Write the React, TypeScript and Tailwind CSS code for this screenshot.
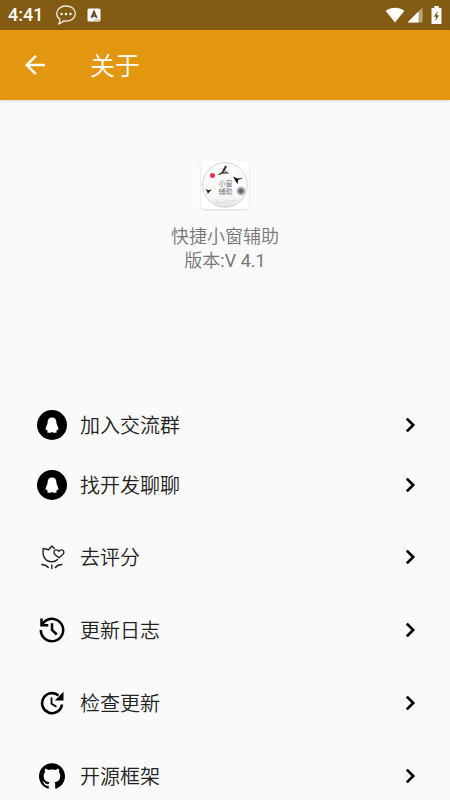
import type {ReactNode} from "react";
import {MdArrowBack} from "react-icons/md";

export default function App() {
    return <div className="flex h-screen flex-col bg-[#fafafa] font-['Roboto','Noto_Sans_CJK_SC',sans-serif]">
        <StatusBar/>
        <header className="z-10 flex h-[70px] shrink-0 items-center bg-[#e3970f] px-5 text-white shadow">
            <button type="button" aria-label="返回">
                <MdArrowBack className="size-[30px]"/>
            </button>
            <h1 className="ml-10 pt-1 text-[25px] leading-8 font-[350]">关于</h1>
        </header>

        <main className="min-h-0 flex-1 overflow-y-auto [scrollbar-width:none]">
            <div className="flex h-[295px] flex-col items-center pt-[61px]">
                <AppLogo/>
                <div className="mt-4 text-center text-[18px] leading-6 font-[350] text-[#757575]">
                    <p>快捷小窗辅助</p>
                    <p>版本<span className="font-normal">:V 4.1</span></p>
                </div>
            </div>

            <nav>
                <Row icon={<QQIcon/>} label="加入交流群" className="h-[60px]"/>
                <Row icon={<QQIcon/>} label="找开发聊聊" className="mb-[5px] h-[60px]"/>
                <Row icon={<TulipIcon/>} label="去评分" className="h-[73px]"/>
                <Row icon={<HistoryIcon/>} label="更新日志" className="h-[73px]"/>
                <Row icon={<UpdateIcon/>} label="检查更新" className="h-[73px]"/>
                <Row icon={<GithubIcon/>} label="开源框架" className="h-[73px]"/>
            </nav>
        </main>
    </div>
}

interface RowProps {
    icon: ReactNode;
    label: string;
    className: string;
}

function Row({icon, label, className}: RowProps) {
    return <button type="button" className={`flex w-full items-center pl-9 pr-7 text-black ${className}`}>
        <span className="flex w-8 justify-center">{icon}</span>
        <span className="ml-3 flex-1 pt-[2px] text-left text-[20px] leading-7 font-[350] text-[#212121]">{label}</span>
        <svg className="size-6" viewBox="0 0 24 24" fill="none" stroke="currentColor" strokeWidth="2.7">
            <path d="M8.8 5.6 15.2 12l-6.4 6.4"/>
        </svg>
    </button>
}

function StatusBar() {
    return <div className="flex h-[30px] shrink-0 items-center bg-[#845b13] px-2 text-white">
        <span className="text-[18px] leading-6 font-medium">4:41</span>
        <svg className="ml-3 h-5 w-[22px]" viewBox="0 0 22 20" fill="none" stroke="#f3ede2">
            <path
                strokeWidth="1.3"
                d="M11 1C5.6 1 1.7 4.2 1.7 8.5c0 2.4 1.1 4.2 3 5.5.5 1.7.2 3.4-.9 4.8 2.1-.2 3.7-1.2 4.9-2.9.8.1 1.5.2 2.3.2 5.4 0 9.3-3.2 9.3-7.6S16.4 1 11 1Z"
            />
            <g fill="#fff" stroke="none">
                <circle cx="6.5" cy="9" r="1.2"/>
                <circle cx="11" cy="9" r="1.2"/>
                <circle cx="15.5" cy="9" r="1.2"/>
            </g>
        </svg>
        <svg className="ml-[10px] size-[14px]" viewBox="0 0 14 14">
            <rect x=".5" y=".5" width="13" height="13" rx="1.5" fill="#fff"/>
            <path d="M4.3 9.8 7 3.7l2.7 6.1M5.2 8h3.6" fill="none" stroke="#5a4420" strokeWidth="1.7"/>
            <path d="M7.5 12h5" stroke="#845b13" strokeDasharray="1 1"/>
        </svg>
        <svg className="ml-auto h-4 w-5" viewBox="0 0 20 16">
            <path d="M10 15.5.7 4.1C3.3 1.9 6.6.8 10 .8s6.7 1.1 9.3 3.3Z" fill="#fff"/>
        </svg>
        <svg className="ml-[2px] size-4" viewBox="0 0 16 16">
            <path d="M.5 15.5 15.5.5v15Z" fill="#fff" opacity=".45"/>
            <path d="M.5 15.5 11.5 4.5v11Z" fill="#fff"/>
        </svg>
        <svg className="ml-2 h-[18px] w-[11px]" viewBox="0 0 11 18">
            <path d="M3.3 0h4.4v2h1.8q1 0 1 1v14q0 1-1 1h-8q-1 0-1-1V3q0-1 1-1h1.8Z" fill="#fff"/>
            <path d="M6.8 4.8 2.8 10.7h2.3L4.2 15.2l4-6H5.9Z" fill="#845b13"/>
        </svg>
    </div>
}

function AppLogo() {
    return <svg
        className="size-12 rounded-sm bg-white shadow"
        viewBox="0 0 48 48"
        role="img"
        aria-label="快捷小窗辅助"
    >
        <defs>
            <radialGradient id="ink">
                <stop offset="0" stopColor="#555"/>
                <stop offset=".5" stopColor="#8a8a8a"/>
                <stop offset="1" stopColor="#ccc" stopOpacity="0"/>
            </radialGradient>
            <linearGradient id="mist" x1="0" y1="0" x2="0" y2="1">
                <stop offset=".7" stopColor="#fbfbfb"/>
                <stop offset="1" stopColor="#e4e4e4"/>
            </linearGradient>
        </defs>
        <circle cx="24" cy="24" r="22.3" fill="url(#mist)" stroke="#c9c9c9" strokeWidth=".8"/>
        <circle cx="11.5" cy="14.5" r="2.5" fill="#e8344b"/>
        <circle cx="40" cy="30" r="5.5" fill="url(#ink)"/>
        <g fill="none" stroke="#222" strokeLinecap="round">
            <path d="m24.5 5.5-3.2 6" strokeWidth="1.5"/>
            <path d="m18 13.5 3.5-1.8 5.5.3" strokeWidth="1.2"/>
            <path d="m22 8 3.5 3M25.5 5.5l-2 4" strokeWidth=".8"/>
        </g>
        <g fill="#161616">
            <path d="m32 15.5 4.5 2 6-.8-5.3 2.2-.7 4.1-1.9-2.8Z"/>
            <path d="m4.5 28 3 1.2 3.5-1-2.3 2.3-1.9 2.5-.6-2.5Z"/>
        </g>
        <circle cx="16" cy="41" r="1.5" fill="#dcdcdc"/>
        <path d="M18 43c3-2 5-1 8-3s6 1 10-1" fill="none" stroke="#dedede"/>
        <g fill="#777" fontSize="7" textAnchor="middle">
            <text x="24.5" y="25">小窗</text>
            <text x="24.5" y="33">辅助</text>
        </g>
    </svg>
}

function QQIcon() {
    return <svg className="size-[30px]" viewBox="0 0 30 30">
        <circle cx="15" cy="15" r="15"/>
        <path
            fill="#fff"
            d="M15 7.6c-2.8 0-4.4 1.9-4.4 4.7 0 1.2-.3 1.9-.8 3-.7 1.5-1.2 2.6-1.2 3.9 0 1 .5 1.3 1.3.4.2.7.5 1.2 1 1.7-1 .5-1.1 1.4.4 1.5 1.4.1 2.7-.1 3.7-.8 1 .7 2.3.9 3.7.8 1.5-.1 1.4-1 .4-1.5.5-.5.8-1 1-1.7.8.9 1.3.6 1.3-.4 0-1.3-.5-2.4-1.2-3.9-.5-1.1-.8-1.8-.8-3 0-2.8-1.6-4.7-4.4-4.7Z"
        />
    </svg>
}

function TulipIcon() {
    return <svg
        className="size-[26px]"
        viewBox="0 0 26 26"
        fill="none"
        stroke="#222"
        strokeWidth="1.4"
        strokeLinecap="round"
        strokeLinejoin="round"
    >
        <path d="M15.3 4.5 12.8 2 9.8 5.8 4.2 4.5c-.9 7.5 1.4 13.3 8.6 13.3 2.6 0 4.500-.8 5.700-2.300"/>
        <path d="M19.9 13.7c-3-2-5-3.4-5-5.500 0-2.600 3.600-3.300 5-.700 1.400-2.600 5-1.900 5 .7 0 2.100-2 3.500-5 5.500Z"/>
        <path d="M12.800 21v3.500M2.800 20.500c2.700 0 4.700 1 6.500 3M22.800 20.500c-2.700 0-4.700 1-6.500 3"/>
    </svg>
}

function HistoryIcon() {
    return <svg className="size-7" viewBox="0 0 28 28" fill="none" stroke="currentColor" strokeWidth="2.5">
        <path d="M2.8 14A11.2 11.2 0 1 0 6 6.2L3.5 9.3"/>
        <path d="M3.5 2.5v6.8h6.8M14 7.3V14l4.8 4.5"/>
    </svg>
}

function UpdateIcon() {
    return <svg className="size-6" viewBox="0 0 24 24" fill="none" stroke="currentColor">
        <path d="M22 13.5A10 10 0 1 1 18.5 4.5" strokeWidth="2.6"/>
        <path d="M23.5.8v8.7h-8.7Z" fill="currentColor" stroke="none"/>
        <path d="M11.5 6.5v6.3l5 3" strokeWidth="1.8"/>
    </svg>
}

function GithubIcon() {
    return <svg className="size-[26px]" viewBox="0 0 24 24" fill="currentColor">
        <path
            d="M12 .297c-6.63 0-12 5.373-12 12 0 5.303 3.438 9.8 8.205 11.385.6.113.82-.258.82-.577 0-.285-.01-1.04-.015-2.04-3.338.724-4.042-1.61-4.042-1.61C4.422 18.07 3.633 17.7 3.633 17.7c-1.087-.744.084-.729.084-.729 1.205.084 1.838 1.236 1.838 1.236 1.07 1.835 2.809 1.305 3.495.998.108-.776.417-1.305.76-1.605-2.665-.3-5.466-1.332-5.466-5.93 0-1.31.465-2.38 1.235-3.22-.135-.303-.54-1.523.105-3.176 0 0 1.005-.322 3.3 1.23.96-.267 1.98-.399 3-.405 1.02.006 2.04.138 3 .405 2.28-1.552 3.285-1.23 3.285-1.23.645 1.653.24 2.873.12 3.176.765.84 1.23 1.91 1.23 3.22 0 4.61-2.805 5.625-5.475 5.92.42.36.81 1.096.81 2.22 0 1.606-.015 2.896-.015 3.286 0 .315.21.69.825.57C20.565 22.092 24 17.592 24 12.297c0-6.627-5.373-12-12-12"
        />
    </svg>
}
